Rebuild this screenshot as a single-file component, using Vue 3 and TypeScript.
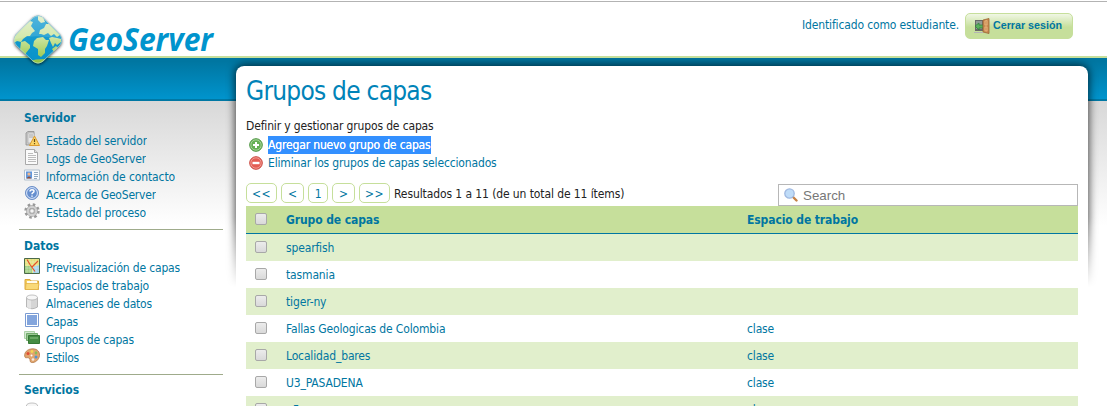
<script setup lang="ts">
interface Item { icon: string; text: string; w: number }
interface Section { title: string; items: Item[] }
const sections: Section[] = [
  { title: 'Servidor', items: [
    { icon: 'server', text: 'Estado del servidor', w: 101 },
    { icon: 'page', text: 'Logs de GeoServer', w: 100 },
    { icon: 'card', text: 'Información de contacto', w: 129 },
    { icon: 'help', text: 'Acerca de GeoServer', w: 110 },
    { icon: 'gear', text: 'Estado del proceso', w: 100 },
  ] },
  { title: 'Datos', items: [
    { icon: 'map', text: 'Previsualización de capas', w: 134 },
    { icon: 'folder', text: 'Espacios de trabajo', w: 103 },
    { icon: 'db', text: 'Almacenes de datos', w: 106 },
    { icon: 'layer', text: 'Capas', w: 32 },
    { icon: 'layers', text: 'Grupos de capas', w: 88 },
    { icon: 'palette', text: 'Estilos', w: 33 },
  ] },
  { title: 'Servicios', items: [{ icon: 'db', text: '', w: 0 }] },
]
const rows: { name: string; ws: string }[] = [
  { name: 'spearfish', ws: '' },
  { name: 'tasmania', ws: '' },
  { name: 'tiger-ny', ws: '' },
  { name: 'Fallas Geologicas de Colombia', ws: 'clase' },
  { name: 'Localidad_bares', ws: 'clase' },
  { name: 'U3_PASADENA', ws: 'clase' },
  { name: 'u5', ws: 'clase' },
]
const pages: { label: string; size: string }[] = [
  { label: '<<', size: 'wide' },
  { label: '<', size: 'mid' },
  { label: '1', size: 'slim' },
  { label: '>', size: 'mid' },
  { label: '>>', size: 'wide' },
]
</script>

<template>
  <div class="app">
    <header class="top">
      <div class="brand">
        <svg class="logo" width="56" height="56" viewBox="0 0 56 56">
          <defs>
            <linearGradient id="sea" x1="0" y1="0" x2="0" y2="1"><stop offset="0" stop-color="#3aabd8" /><stop offset=".55" stop-color="#0f97cd" /><stop offset="1" stop-color="#0892ca" /></linearGradient>
            <linearGradient id="land" gradientUnits="userSpaceOnUse" x1="0" y1="6" x2="0" y2="50"><stop offset="0" stop-color="#e0efc8" /><stop offset=".45" stop-color="#cde5a0" /><stop offset="1" stop-color="#93c443" /></linearGradient>
            <clipPath id="gem"><path d="M23 5.500Q28 1.500 33 5.500L50 22.500Q54 28 50 33.500L33 49.500Q28 53.500 23 49.500L6 33.500Q2 28 6 22.500Z" /></clipPath>
          </defs>
          <path class="gem" d="M23 5.500Q28 1.500 33 5.500L50 22.500Q54 28 50 33.500L33 49.500Q28 53.500 23 49.500L6 33.500Q2 28 6 22.500Z" fill="url(#sea)" />
          <g clip-path="url(#gem)" fill="url(#land)">
            <path d="M3 26L13 15L20 9L23 10L21 14L25 19L22 21L20 24L17 24L13 27L11 30L7 29L4 31Z" />
            <path d="M11 30L15 29L20 33L20 36L16 41L15 44L10 38Z" />
            <path d="M28 4L33 5L35 10L31 11L28 8Z" />
            <path d="M29 22L30 18L34 16L36 12L39 12L50 23L47 25L44 22L41 24L38 21L34 23L31 22Z" />
            <path d="M24 29L27 26L33 25L36 28L39 28L37 34L35 37L35 41L31 45L28 43L28 37L23 34Z" />
            <path d="M39 26L42 25L47 26L51 27L51 30L47 33L45 31L43 35L41 31Z" />
            <path d="M42 37L46 34L48 36L44 40Z" />
            <path d="M20 49L26 47.500L36 47L32 54L24 54Z" />
          </g>
          <path clip-path="url(#gem)" d="M2 28Q28 20 54 29L28 2Z" fill="#fff" opacity=".12" />
          <path d="M23 6Q28 2 33 6L50 23Q53.500 28 50 33L33 49Q28 53 23 49L6 33Q2.500 28 6 23Z" fill="none" stroke="#c9e6dc" stroke-opacity=".55" />
        </svg>
        <svg class="word" width="150" height="42"><text x="0" y="30" textLength="145" lengthAdjust="spacingAndGlyphs">GeoServer</text></svg>
      </div>
      <div class="login">
        <svg class="t" width="157" height="20"><text x="0" y="14" textLength="157">Identificado como estudiante.</text></svg>
        <button class="logout">
          <svg width="16" height="16" viewBox="0 0 16 16"><path fill="#686868" d="M1 2h9v11H1z" /><path fill="#8f9a94" d="M2 3h6v8H2z" /><path fill="#b4b4b4" d="M0 14h9v1H0z" /><path fill="#59b15c" stroke="#2c7d38" stroke-width=".7" d="M1 8l4-3v2h4v3H5v2z" /><path fill="#c98b52" stroke="#9b6535" stroke-width=".8" d="M9 2l6-1.500v15L9 14z" /><path stroke="#e6b27b" fill="none" d="M11 3l2-.5v4.500h-2zM11 9h2v4l-2-.3z" /></svg>
          <svg width="70" height="16"><text x="0" y="11" textLength="69" lengthAdjust="spacingAndGlyphs">Cerrar sesión</text></svg>
        </button>
      </div>
    </header>
    <div class="band"></div>
    <div class="body">
      <nav class="side">
        <section v-for="s in sections" :key="s.title">
          <h3>{{ s.title }}</h3>
          <ul>
            <li v-for="(i, n) in s.items" :key="n">
              <svg class="ic" width="16" height="16" viewBox="0 0 16 16">
                <g v-if="i.icon === 'server'"><path d="M2 2l2-1.500h6V12l-2 2H2z" fill="#c9c9c9" stroke="#8d8d8d" stroke-width=".8" /><path d="M4 2h6v10H4z" fill="#e7e7e7" stroke="#aaa" stroke-width=".6" /><path d="M5 4h4M5 6h4" stroke="#999" stroke-width=".8" /><path d="M10.500 5L15.500 14.500H5.500z" fill="#fbd568" stroke="#dc9b2e" stroke-linejoin="round" /><path d="M10.500 8v3M10.500 12v1.200" stroke="#6b4c15" stroke-width="1.200" /></g>
                <g v-else-if="i.icon === 'page'"><path d="M1.500 .5h9l3 3v12h-12z" fill="#fafafa" stroke="#a9a9a9" /><path d="M10.500 .5v3h3" fill="#ddd" stroke="#a9a9a9" /><path d="M4 4.500h5M4 6.500h8M4 8.500h8M4 10.500h8M4 12.500h8" stroke="#bcbcbc" /></g>
                <g v-else-if="i.icon === 'card'"><path d="M.5 3h15v10H.5z" fill="#f7fafd" stroke="#b3c1ce" /><path d="M2 4.500h6v7H2z" fill="#5f97de" /><circle cx="5" cy="7" r="1.600" fill="#efb78d" /><path d="M2.500 11.500Q5 7.500 7.500 11.500z" fill="#944f36" /><path d="M10 5.500h4M10 7.500h4M10 9.500h4M10 11.500h3" stroke="#90a8bf" /></g>
                <g v-else-if="i.icon === 'help'"><circle cx="8" cy="8" r="6.500" fill="#7599d2" stroke="#6c8fc7" /><circle cx="8" cy="8" r="5.400" fill="#668fcf" stroke="#dce7fa" /><path d="M6 6.500Q6 4.700 8 4.700T10 6.300Q10 7.300 8.800 7.800Q8 8.200 8 9.300M8 10.500v1.300" fill="none" stroke="#fff" stroke-width="1.500" /></g>
                <g v-else-if="i.icon === 'gear'"><circle cx="8" cy="8" r="6.500" fill="none" stroke="#999" stroke-width="2.400" stroke-dasharray="2.550 2.550" /><circle cx="8" cy="8" r="4.200" fill="none" stroke="#999" stroke-width="3.200" /><circle cx="8" cy="8" r="4.200" fill="none" stroke="#d0d0d0" stroke-width="2.200" /><circle cx="8" cy="8" r="2.300" fill="#f4f4f4" stroke="#929292" stroke-width=".8" /></g>
                <g v-else-if="i.icon === 'map'"><path d="M.5.5h15v15H.5z" fill="#e3e27a" stroke="#4b6a4a" /><path d="M1 8h7v7H1z" fill="#9bcc7d" /><path d="M9 9l6-2v8H9z" fill="#a3d2eb" /><path d="M3 1v14M6 1v14M9 1v14M12 1v14M1 4h14M1 7h14M1 10h14M1 13h14" stroke="#fff" stroke-opacity=".45" stroke-width=".6" /><path d="M3 1.500l3 5 5 7M14 3l-6 6" fill="none" stroke="#e5502b" stroke-width="1.200" /></g>
                <g v-else-if="i.icon === 'folder'"><path d="M1 12V3.500h5l1 1.500h7.500v8.500H1z" fill="#f3ce61" stroke="#dda83b" /><path d="M3 5h10v4H3z" fill="#fffbed" /><path d="M2 7.500h13l-1 6H1.500z" fill="#f9d978" stroke="#e2b248" stroke-width=".8" /></g>
                <g v-else-if="i.icon === 'db'"><path d="M2.500 3.500v9.500Q8 16.500 13.500 13V3.500z" fill="#d6d6d6" stroke="#aaa" stroke-width=".8" /><path d="M4 5v9M6 5v10" stroke="#f5f5f5" /><ellipse cx="8" cy="3.500" rx="5.500" ry="2.500" fill="#f7f7f7" stroke="#b4b4b4" stroke-width=".8" /></g>
                <g v-else-if="i.icon === 'layer'"><path d="M1.500 1.500h13v13h-13z" fill="#fff" stroke="#7b9bd2" /><path d="M3 3h10v10H3z" fill="#83a5dd" /></g>
                <g v-else-if="i.icon === 'layers'"><path d="M.5 1.500h10v7H.5z" fill="#d4e9d1" stroke="#abd1a7" /><path d="M2.500 3.500h11v7h-11z" fill="#99c792" stroke="#71aa6b" /><path d="M4.500 5.500h11v8h-11z" fill="#458c43" stroke="#357834" /><path d="M6 7h8v2H6z" fill="#69a963" /></g>
                <g v-else><path d="M7 1C12 0 16 3 15.500 7.500C15 12 11 15 7.500 14.500C5 14 7 11 5 10C3 9 1 11 .7 8C.3 4 3.500 1.500 7 1z" fill="#e0a56e" stroke="#b37745" stroke-width=".8" /><circle cx="4" cy="5.500" r="1.500" fill="#e14a31" /><circle cx="8" cy="3.500" r="1.400" fill="#f4d451" /><circle cx="12" cy="5" r="1.400" fill="#88bd58" /><circle cx="12" cy="9" r="1.500" fill="#4f92d4" /><circle cx="9" cy="11.500" r="1.300" fill="#f6eadf" /><circle cx="7.500" cy="7.500" r="1" fill="#fff" /></g>
              </svg>
              <svg v-if="i.text" class="t" :width="i.w" height="18"><text x="0" y="14" :textLength="i.w">{{ i.text }}</text></svg>
            </li>
          </ul>
        </section>
      </nav>
      <main class="page">
        <div class="shade"></div>
        <h1>Grupos de capas</h1>
        <p class="desc">Definir y gestionar grupos de capas</p>
        <div class="act">
          <svg width="14" height="14" viewBox="0 0 14 14"><circle cx="7" cy="7" r="6.300" fill="#66af55" stroke="#4d9441" /><circle cx="7" cy="7" r="5.200" fill="none" stroke="#b6dca9" stroke-width=".8" /><path d="M7 4v6M4 7h6" stroke="#fff" stroke-width="2" /></svg>
          <span class="sel">Agregar nuevo grupo de capas</span>
        </div>
        <div class="act">
          <svg width="14" height="14" viewBox="0 0 14 14"><circle cx="7" cy="7" r="6.300" fill="#e45d53" stroke="#c94a42" /><circle cx="7" cy="7" r="5.200" fill="none" stroke="#f3aaa3" stroke-width=".8" /><path d="M3.500 7h7" stroke="#fff" stroke-width="2.400" /></svg>
          <span>Eliminar los grupos de capas seleccionados</span>
        </div>
        <div class="tools">
          <a v-for="p in pages" :key="p.label" :class="p.size">{{ p.label }}</a>
          <span class="res">Resultados 1 a 11 (de un total de 11 ítems)</span>
          <div class="search">
            <svg width="14" height="14" viewBox="0 0 14 14"><path d="M8.500 8.500l4 4" stroke="#c58145" stroke-width="2.400" stroke-linecap="round" /><circle cx="5.500" cy="5.500" r="4.700" fill="#bfdcf8" stroke="#9fb8e0" stroke-width="1.300" /></svg>
            <span>Search</span>
          </div>
        </div>
        <div class="table">
          <div class="row head"><i class="cb"></i><span class="name">Grupo de capas</span><span>Espacio de trabajo</span></div>
          <div v-for="(r, n) in rows" :key="n" class="row" :class="{ odd: n % 2 === 0 }"><i class="cb"></i><span class="name">{{ r.name }}</span><span>{{ r.ws }}</span></div>
        </div>
      </main>
    </div>
  </div>
</template>

<style>
body { margin: 0; overflow: hidden; }
</style>
<style scoped>
.app { box-sizing: border-box; width: 1107px; height: 406px; overflow: hidden; background: #fff; color: #0076a1; font: 12px/18px "DejaVu Sans Condensed", "DejaVu Sans", sans-serif; font-stretch: condensed; letter-spacing: -0.15px; }
svg { display: block; flex: none; }
text { fill: currentColor; }
.top { position: relative; z-index: 2; box-sizing: border-box; height: 58px; display: flex; justify-content: space-between; align-items: flex-start; border-bottom: 2px solid #c6df9b; background: linear-gradient(#fff 1px, #b3b3b3 1px, #b3b3b3 2px, #fff 2px); }
.brand { display: flex; padding: 12px 0 0 10px; }
.gem { filter: drop-shadow(0 1px 1.500px rgba(0,0,0,.7)); }
.logo { overflow: visible; }
.word { margin: 9px 0 0 2px; overflow: visible; font: italic bold 31.500px "Open Sans", "Noto Sans", sans-serif; color: #0094cd; letter-spacing: 0; }
.login { display: flex; padding: 13px 34px 0 0; gap: 6px; }
.login .t { margin-top: 2px; }
.logout { box-sizing: border-box; width: 108px; height: 26px; padding: 0 0 0 8px; display: flex; align-items: center; gap: 3px; border: 1px solid #c6df9b; border-radius: 5px; background: linear-gradient(#f0f7e4, #c6df9b 55%); color: #0076a1; font: bold 11px "Liberation Sans", sans-serif; }
.band { box-sizing: border-box; height: 43px; background: linear-gradient(#0076a1 8%, #0094cd); border-bottom: 2px solid #0078a4; }
.body { display: flex; align-items: flex-start; height: 305px; background: linear-gradient(#d8d8d8, #fff 125px); }
.side { width: 204px; margin: 0 13px 0 19px; }
.side section { box-sizing: content-box; height: 127px; border-bottom: 1px solid #9fab8b; padding: 1px 0 0 5px; }
.side section:nth-child(2) { height: 143px; }
.side section:nth-child(3) { border: 0; padding-top: 0; }
h3 { margin: 7px 0 4px; font-size: 12px; line-height: 18px; letter-spacing: 0; }
section:nth-child(n+2) h3 { margin: 6px 0 3px; }
ul { list-style: none; margin: 0; padding: 0; }
li { height: 18px; display: flex; gap: 6px; }
.page { position: relative; z-index: 1; box-sizing: border-box; width: 852px; height: 340px; margin-top: -35px; padding: 0 10px; border-radius: 8px; background: #fff; }
.shade { position: absolute; z-index: -1; inset: -14px -14px auto; height: 236px; overflow: hidden; pointer-events: none; -webkit-mask-image: linear-gradient(#000 165px, transparent 235px); mask-image: linear-gradient(#000 165px, transparent 235px); }
.shade::before { content: ""; position: absolute; inset: 14px 14px -30px; border-radius: 8px; box-shadow: 0 0 8px 1px rgba(0,0,0,.7); }
h1 { margin: 0; padding-top: 10px; font-size: 26px; line-height: 30px; font-weight: 400; color: #0083b8; letter-spacing: -.75px; }
.desc { margin: 11px 0 1px; color: #222; }
.act { display: flex; height: 18px; align-items: center; gap: 5px; padding-left: 3px; }
.act span { height: 18px; line-height: 19px; }
.sel { background: #3390ff; color: #fff; text-shadow: 0 0 .5px #fff; }
.tools { display: flex; height: 34px; padding-top: 11px; box-sizing: border-box; gap: 4px; }
.tools a { box-sizing: border-box; height: 20px; border: 1px solid #c6df9b; border-radius: 5px; line-height: 20px; text-align: center; flex: none; }
.wide { width: 31px; letter-spacing: .5px; }
.mid { width: 23px; }
.slim { width: 20px; }
.res { color: #222; line-height: 22px; letter-spacing: -.1px; }
.search { margin-left: auto; box-sizing: border-box; width: 300px; height: 22px; border: 1px solid #b7b7b7; display: flex; align-items: center; gap: 5px; margin-top: 1px; padding-left: 5px; color: #777; font: 13.330px "Liberation Sans", sans-serif; letter-spacing: 0; }
.row { display: flex; height: 27px; line-height: 28px; }
.row.odd { background: #e1efcc; }
.head { box-sizing: border-box; height: 28px; background: #c6df9b; border-bottom: 1px solid #0076a1; font-weight: 700; letter-spacing: -.1px; }
.cb { box-sizing: border-box; width: 12px; height: 12px; margin: 7px 19px 0 9px; border: 1px solid #a8a8a8; border-radius: 2px; background: linear-gradient(#ececec, #d9d9d9); }
.name { width: 461px; }
</style>
